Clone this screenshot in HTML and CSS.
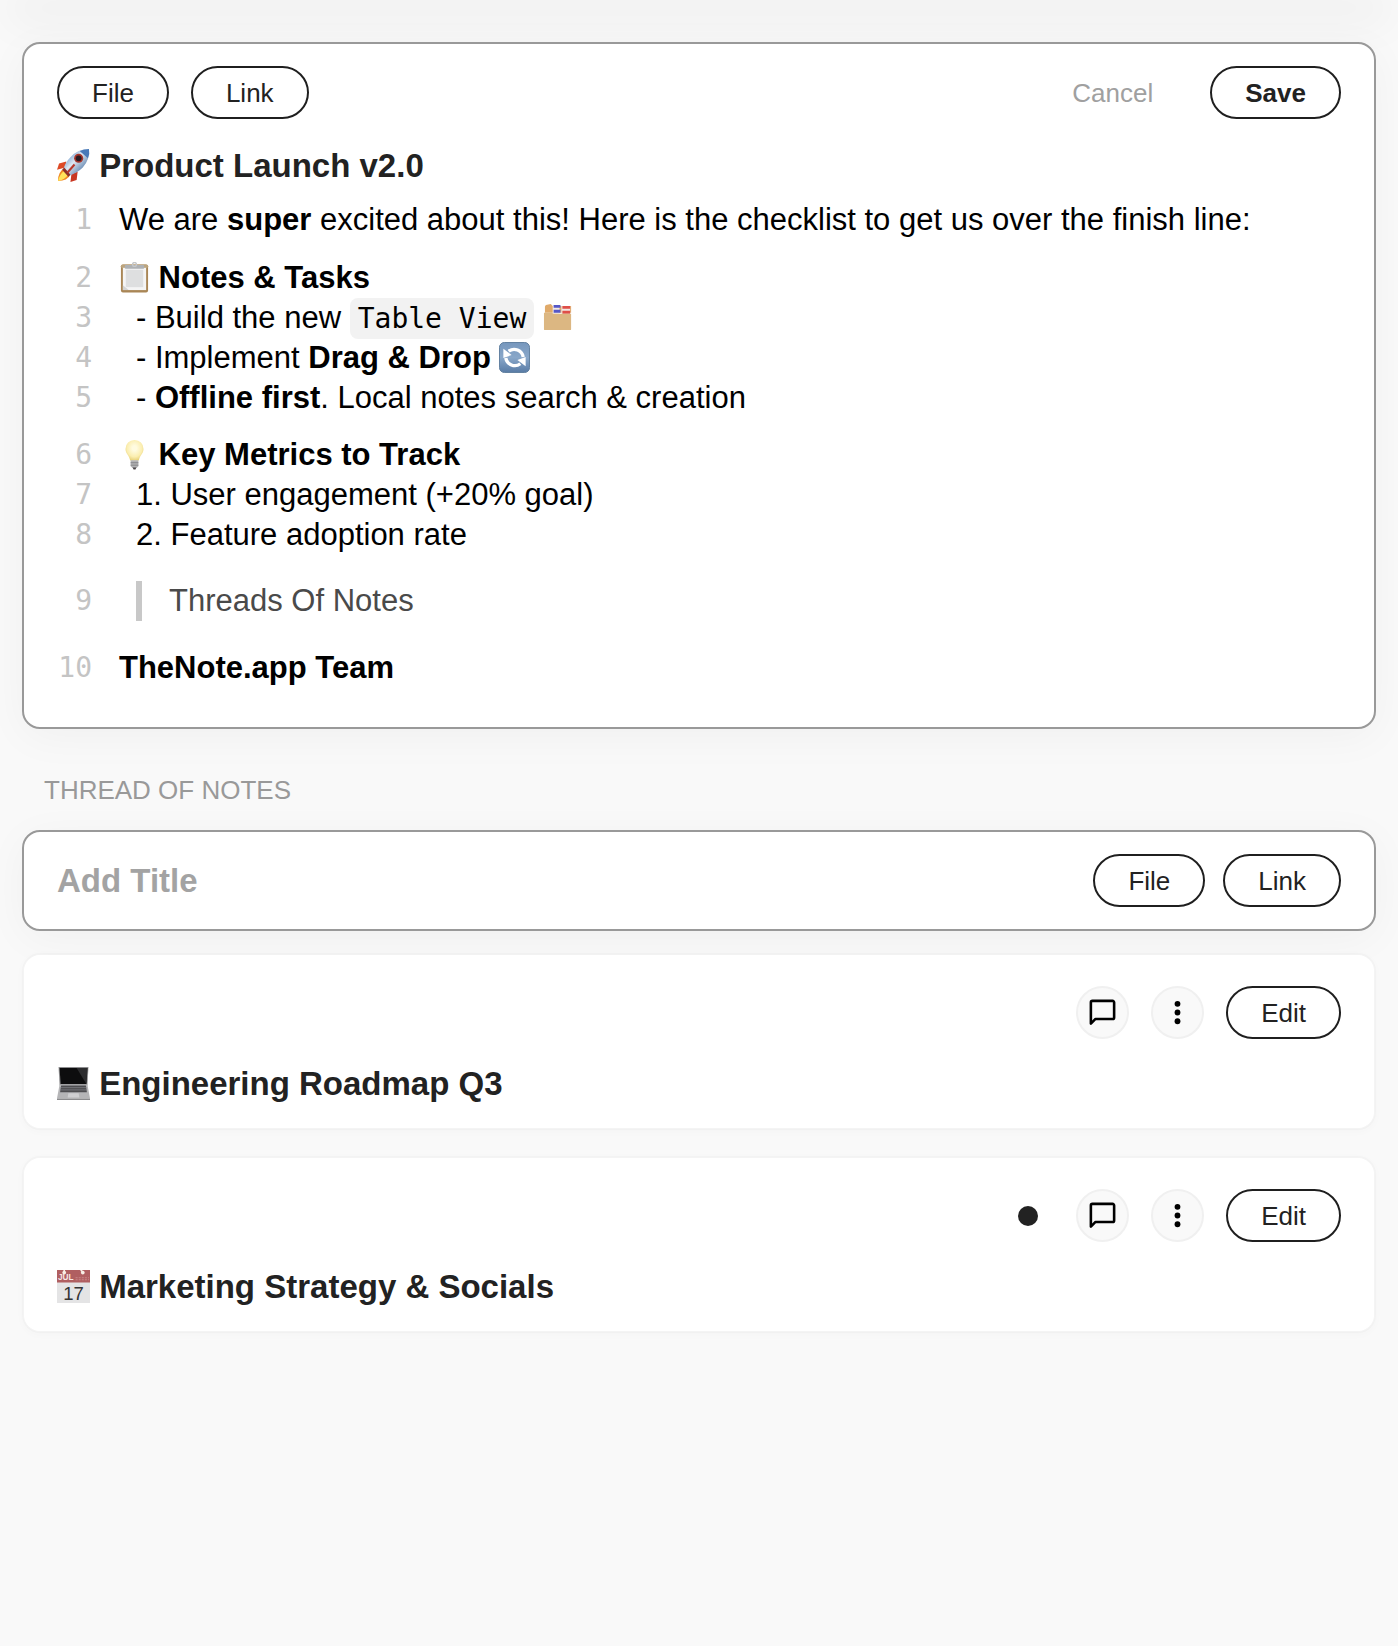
FILE: index.html
```html
<!DOCTYPE html>
<html lang="en">
<head>
  <meta charset="UTF-8">
  <meta name="viewport" content="width=device-width, initial-scale=1.0">
  <title>TheNote.app</title>
  <link rel="stylesheet" href="styles.css">
</head>
<body>
  <!-- Shared icons -->
  <svg class="sprite" aria-hidden="true">
    <defs>
      <symbol id="icon-comment" viewBox="0 0 24 24">
        <path d="M3 20.6V4.2A1.2 1.2 0 0 1 4.2 3h15.6A1.2 1.2 0 0 1 21 4.2v11.6a1.2 1.2 0 0 1-1.2 1.2H6.6z" fill="none" stroke="#000" stroke-width="2" stroke-linejoin="round"/>
      </symbol>
      <symbol id="icon-more" viewBox="0 0 32 32">
        <circle cx="16" cy="7" r="3"/>
        <circle cx="16" cy="16" r="3"/>
        <circle cx="16" cy="25" r="3"/>
      </symbol>
    </defs>
  </svg>

  <header class="topbar"></header>

  <main class="container">
    <section class="card card-active editor">
      <div class="toolbar">
        <button type="button" class="btn">File</button>
        <button type="button" class="btn">Link</button>
        <div class="toolbar-right">
          <button type="button" class="btn btn-cancel">Cancel</button>
          <button type="button" class="btn btn-save">Save</button>
        </div>
      </div>

      <h2 class="title">
        <svg class="emoji" viewBox="0 0 32 32" role="img" aria-label="Rocket">
          <defs>
            <linearGradient id="hull" x1="0" y1="0" x2="1" y2="1">
              <stop offset="0.1" stop-color="#4a83c4"/>
              <stop offset="0.45" stop-color="#dfe8f1"/>
              <stop offset="0.75" stop-color="#6c8db5"/>
              <stop offset="1" stop-color="#2c4f80"/>
            </linearGradient>
          </defs>
          <path d="M9 12 2 14 0 20 8 18z" fill="#dd4a26"/>
          <path d="M20 22 19 30 13 32 14 24z" fill="#c93722"/>
          <path d="M7 19Q1 22 1 31 10 31 13 25z" fill="#f08a24"/>
          <path d="M7 21Q2 25 1 31 7 30 11 25z" fill="#ffe45a"/>
          <path d="M31 0Q20 0 13 8 8 13 6 20L12 26Q20 23 25 18 32 10 31 0z" fill="url(#hull)"/>
          <path d="M31 0Q26 0 22 2L30 9Q32 5 31 0z" fill="#4879b8"/>
          <path d="M7 18 13 25 11 27 5 20z" fill="#8c3128"/>
          <circle cx="21" cy="9" r="4.4" fill="#a7352b"/>
          <circle cx="21" cy="9" r="2.8" fill="#2b1d24"/>
          <path d="M17 15 10 23" stroke="#b8392b" stroke-width="2"/>
        </svg>
        Product Launch v2.0
      </h2>

      <div class="lines">
        <div class="line">
          <span class="num">1</span>
          <p>We are <b>super</b> excited about this! Here is the checklist to get us over the finish line:</p>
        </div>
        <div class="line line-heading">
          <span class="num">2</span>
          <h3>
            <svg class="emoji" viewBox="0 0 32 32" role="img" aria-label="Clipboard">
              <rect x="2" y="2.5" width="28" height="29" rx="2" fill="#a98656"/>
              <rect x="2" y="2.5" width="28" height="4" rx="2" fill="#bda57e"/>
              <rect x="4" y="6" width="24" height="23" fill="#f5f5f5"/>
              <path d="M7 8h18v18H7z" fill="#dedfe0"/>
              <path d="M4 29v-5l6 5z" fill="#d4d4d4"/>
              <rect x="6" y="3" width="20" height="4" rx="1" fill="#aeb1b4"/>
              <circle cx="16" cy="2.5" r="2" fill="none" stroke="#c5c7c9" stroke-width="1.5"/>
            </svg>
            Notes &amp; Tasks
          </h3>
        </div>
        <div class="line">
          <span class="num">3</span>
          <p class="item">- Build the new <code>Table View</code>
            <svg class="emoji" viewBox="0 0 32 32" role="img" aria-label="Card index dividers">
              <path d="M2 11V5q0-1 1-2l5-1 2 2h19v7z" fill="#e0aa6a"/>
              <path d="M10 3h7v9h-7zM19 4h9v8h-9z" fill="#f2e9e4"/>
              <path d="M11 3h7v3h-7zM11 8h7v3h-7z" fill="#5557c8"/>
              <path d="M20 4h8v3h-8zM20 9h8v3h-8z" fill="#df4f48"/>
              <path d="M1 11h8l2 1h18v16q0 1-1 1H2q-1 0-1-1z" fill="#dcb782"/>
            </svg>
          </p>
        </div>
        <div class="line">
          <span class="num">4</span>
          <p class="item">- Implement <b>Drag &amp; Drop</b>
            <svg class="emoji" viewBox="0 0 32 32" role="img" aria-label="Refresh">
              <defs>
                <linearGradient id="tile" x1="0" y1="0" x2="0" y2="1">
                  <stop offset="0" stop-color="#7697bd"/>
                  <stop offset="0.5" stop-color="#89a7c9"/>
                  <stop offset="1" stop-color="#587ba5"/>
                </linearGradient>
              </defs>
              <rect x="0.5" y="0.5" width="31" height="31" rx="5" fill="url(#tile)" stroke="#607f9f"/>
              <path d="M10 9.5a9.5 9.5 0 0 1 15 6M22 22.5a9.5 9.5 0 0 1-15-6" fill="none" stroke="#fff" stroke-width="3.4"/>
              <path d="M4.5 7v9.5l8.5-3zM27.5 25v-9.5l-8.5 3z" fill="#fff"/>
            </svg>
          </p>
        </div>
        <div class="line">
          <span class="num">5</span>
          <p class="item">- <b>Offline first</b>. Local notes search &amp; creation</p>
        </div>
        <div class="line line-heading">
          <span class="num">6</span>
          <h3>
            <svg class="emoji" viewBox="0 0 32 32" role="img" aria-label="Light bulb">
              <defs>
                <radialGradient id="glow" cx="0.5" cy="0.4" r="0.6">
                  <stop offset="0.2" stop-color="#fffbe0"/>
                  <stop offset="0.7" stop-color="#fbeeb0"/>
                  <stop offset="1" stop-color="#e8d27a"/>
                </radialGradient>
              </defs>
              <path d="M16 1a9 9 0 0 1 9.3 9.2c0 5-4.3 7-4.8 12h-9c-.5-5-4.800-7-4.800-12A9 9 0 0 1 16 1z" fill="url(#glow)"/>
              <path d="M12 22h8v6l-2 2h-4l-2-2z" fill="#b3b3b5"/>
              <path d="M12 24.5h8M12 27h8" stroke="#858589" stroke-width="1"/>
              <path d="M14 29.5h4l-1 2h-2z" fill="#4a4547"/>
            </svg>
            Key Metrics to Track
          </h3>
        </div>
        <div class="line">
          <span class="num">7</span>
          <p class="item">1. User engagement (+20% goal)</p>
        </div>
        <div class="line">
          <span class="num">8</span>
          <p class="item">2. Feature adoption rate</p>
        </div>
        <div class="line line-quote">
          <span class="num">9</span>
          <blockquote>Threads Of Notes</blockquote>
        </div>
        <div class="line">
          <span class="num">10</span>
          <p><b>TheNote.app Team</b></p>
        </div>
      </div>
    </section>

    <h4 class="section-label">THREAD OF NOTES</h4>

    <section class="card card-active new-note">
      <input type="text" class="title-input" placeholder="Add Title" aria-label="Add Title">
      <button type="button" class="btn">File</button>
      <button type="button" class="btn">Link</button>
    </section>

    <section class="card note">
      <div class="actions">
        <button type="button" class="icon-btn" aria-label="Comments"><svg><use href="#icon-comment"/></svg></button>
        <button type="button" class="icon-btn" aria-label="More"><svg><use href="#icon-more"/></svg></button>
        <button type="button" class="btn">Edit</button>
      </div>
      <h2 class="title">
        <svg class="emoji" viewBox="0 0 32 32" role="img" aria-label="Laptop">
          <path d="M1.5 0h29l-1 18h-27z" fill="#8d8d8f"/>
          <path d="M2.5 1h27l-1 15.5h-25z" fill="#0d0d0e"/>
          <path d="M19 1h10.5l-1 15.5z" fill="#2c2c2e"/>
          <path d="M2.5 17h27L32 30.5H0z" fill="#b5b5b7"/>
          <path d="M4 18h24l1 6.5H3z" fill="#4d4d50"/>
          <path d="M3.5 20h25M3.3 22.2h25.6" stroke="#85858a" stroke-width="0.7"/>
          <path d="M11 25.5h10l.7 4H10.3z" fill="#cfcfd1"/>
          <path d="M0 30.5h32V32H0z" fill="#8b8b8d"/>
        </svg>
        Engineering Roadmap Q3
      </h2>
    </section>

    <section class="card note">
      <div class="actions">
        <span class="dot"></span>
        <button type="button" class="icon-btn" aria-label="Comments"><svg><use href="#icon-comment"/></svg></button>
        <button type="button" class="icon-btn" aria-label="More"><svg><use href="#icon-more"/></svg></button>
        <button type="button" class="btn">Edit</button>
      </div>
      <h2 class="title">
        <svg class="emoji" viewBox="0 0 32 32" role="img" aria-label="Calendar">
          <path d="M0 0h32v32H0z" fill="#e4e4e5"/>
          <path d="M0 0h32v12H0z" fill="#b05f61"/>
          <circle cx="7" cy="2.5" r="1.8" fill="#f7efe6"/>
          <circle cx="25" cy="2.5" r="1.8" fill="#f7efe6"/>
          <path d="M7 0v2M23 0l2 2" stroke="#f7efe6" stroke-width="1.5"/>
          <path d="M18 7.5h13M18 9.5h13" stroke="#c88586" stroke-width="1" stroke-dasharray="2 1"/>
          <text class="cal-month" x="1" y="10">JUL</text>
          <text class="cal-day" x="16" y="29" text-anchor="middle">17</text>
        </svg>
        Marketing Strategy &amp; Socials
      </h2>
    </section>
  </main>
</body>
</html>
```
FILE: styles.css
```css
* {
  box-sizing: border-box;
}
body {
  margin: 0;
  background-color: #f9f9f9;
  font-family: Helvetica, "Liberation Sans", Arial, sans-serif;
  color: #000;
}
h2, h3, h4, p, blockquote {
  margin: 0;
}
.sprite {
  display: none;
}
/* Zero height bar, only its shadow falls on the page */
.topbar {
  height: 0;
  margin: 0 22px;
  box-shadow: 0 8px 44px 14px rgba(0, 0, 0, 0.05);
}
.container {
  padding: 42px 22px;
}

/* Cards */
.card {
  position: relative;
  padding: 22px 33px;
  background: #fff;
  border: 2px solid #f4f4f4;
  border-radius: 18px;
}
.card-active {
  border-color: #999;
  box-shadow: 0 8px 44px rgba(0, 0, 0, 0.04);
}
.editor {
  padding-bottom: 39px;
}
.new-note {
  display: flex;
  align-items: center;
  gap: 18px;
  margin-bottom: 22px;
}
.note {
  padding-top: 31px;
  padding-bottom: 24px;
  margin-bottom: 26px;
  background-clip: padding-box;
  border-color: rgba(0, 0, 0, 0.02);
  box-shadow: 0 2px 8px rgba(0, 0, 0, 0.02);
}

/* Buttons */
.toolbar, .toolbar-right, .actions {
  display: flex;
  align-items: center;
  gap: 22px;
}
.toolbar-right {
  margin-left: auto;
}
.actions {
  justify-content: flex-end;
}
.btn {
  height: 53px;
  padding: 0 33px;
  background: #fff;
  border: 2px solid #1f1f1f;
  border-radius: 27px;
  font: 26px/30px Helvetica, "Liberation Sans", Arial, sans-serif;
  color: #222;
  cursor: pointer;
}
.btn-save {
  font-weight: bold;
}
.btn-cancel {
  border-color: transparent;
  background: none;
  color: #a0a0a0;
}
.icon-btn {
  display: flex;
  align-items: center;
  justify-content: center;
  width: 53px;
  height: 53px;
  padding: 0;
  background: #f9f9f9;
  border: 2px solid #f0f0f0;
  border-radius: 50%;
  cursor: pointer;
}
.icon-btn svg {
  width: 31px;
  height: 31px;
}
.dot {
  width: 20px;
  height: 20px;
  margin-right: 16px;
  border-radius: 50%;
  background: #222;
}

/* Titles */
.title {
  margin-top: 25px;
  font-size: 33px;
  line-height: 40px;
  color: #222;
}
.editor .title {
  margin-top: 27px;
}
.emoji {
  width: 1em;
  height: 1em;
  vertical-align: -5px;
}
.cal-month {
  font: bold 8px "Liberation Sans", sans-serif;
  fill: #f7e5e5;
}
.cal-day {
  font: 18px "Liberation Sans", sans-serif;
  fill: #333;
}
.title-input {
  flex: 1;
  min-width: 0;
  padding: 0;
  border: 0;
  outline: none;
  background: none;
  font: bold 33px/40px Helvetica, "Liberation Sans", Arial, sans-serif;
  color: #222;
}
.title-input::placeholder {
  color: #a3a3a3;
  opacity: 1;
}
.section-label {
  margin: 46px 22px 25px;
  font-size: 26px;
  line-height: 30px;
  font-weight: normal;
  color: #999;
}

/* Note content */
.lines {
  margin-top: 14px;
  font-size: 31px;
  line-height: 40px;
}
.line {
  display: grid;
  grid-template-columns: 35px 1fr;
  column-gap: 27px;
  min-height: 40px;
}
.line-heading {
  margin-top: 17px;
}
.line:first-child {
  margin-bottom: 18px;
}
.line:first-child + .line-heading {
  margin-top: 0;
}
.line h3 {
  font-size: 31px;
}
.num {
  text-align: right;
  font-family: "DejaVu Sans Mono", monospace;
  font-size: 28px;
  color: #c4c4c4;
}
.item {
  padding-left: 17px;
}
.line code {
  padding: 4px 8px;
  border-radius: 8px;
  background: #f2f2f2;
  font: 28px/28px "DejaVu Sans Mono", monospace;
}
.line-quote {
  margin: 26px 0 27px;
}
.line blockquote {
  margin-left: 17px;
  padding-left: 27px;
  border-left: 6px solid #c8c8c8;
  color: #4a4a4a;
}
```
